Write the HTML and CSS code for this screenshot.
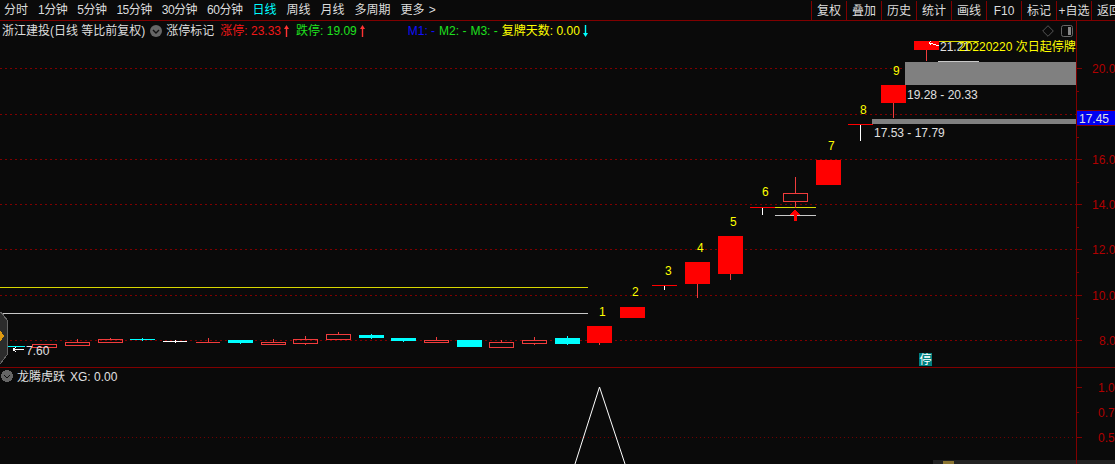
FILE: index.html
```html
<!DOCTYPE html>
<html lang="zh">
<head>
<meta charset="utf-8">
<title>浙江建投</title>
<link rel="stylesheet" href="styles.css">
</head>
<body>
<header class="topbar">
  <nav class="periods">
    <span>分时</span><span class="n">1分钟</span><span class="n">5分钟</span><span class="n">15分钟</span><span class="n">30分钟</span><span class="n">60分钟</span><span class="active">日线</span><span>周线</span><span>月线</span><span>多周期</span><span class="more">更多 &gt;</span>
  </nav>
  <nav class="tools">
    <span>复权</span><span>叠加</span><span>历史</span><span>统计</span><span>画线</span><span>F10</span><span>标记</span><span>+自选</span><span>返回</span>
  </nav>
</header>
<main class="stage">
  <div class="legend">
    <span class="title">浙江建投(日线 等比前复权)</span>
    <svg class="chev" width="12" height="12" viewBox="0 0 12 12"><circle cx="6" cy="6" r="6" fill="#666"/><path d="M3 5l3 3 3-3" fill="none" stroke="#111" stroke-width="1.4"/></svg>
    <span class="mark">涨停标记</span>
    <span class="up">涨停: 23.33</span>
    <svg class="arrow" width="5" height="12" viewBox="0 0 5 12"><path d="M2.5 0L5 4H3.2V12H1.8V4H0Z" fill="#f33"/></svg>
    <span class="down">跌停: 19.09</span>
    <svg class="arrow" width="5" height="12" viewBox="0 0 5 12"><path d="M2.5 0L5 4H3.2V12H1.8V4H0Z" fill="#f33"/></svg>
    <span class="m1">M1: -</span>
    <span class="m2">M2: -</span>
    <span class="m3">M3: -</span>
    <span class="resume">复牌天数: 0.00</span>
    <svg class="arrow" width="5" height="12" viewBox="0 0 5 12"><path d="M2.5 12L5 8H3.2V0H1.8V8H0Z" fill="#0ff"/></svg>
    <svg class="diamond" width="12" height="12" viewBox="0 0 12 12"><path d="M6 .7L11.3 6 6 11.3.7 6Z" fill="none" stroke="#555"/></svg>
    <svg class="panel" width="12" height="12" viewBox="0 0 12 12"><rect x=".5" y=".5" width="11" height="11" rx="2" fill="none" stroke="#666"/><rect x="7" y="2" width="3" height="8" fill="#888"/></svg>
  </div>
  <svg class="chart" width="1115" height="443" viewBox="0 21 1115 443">
    <g class="grid">
      <path d="M0 68.5H1076M0 114.5H1076M0 159.5H1076M0 204.5H1076M0 249.5H1076M0 295.5H1076M0 340.5H1076"/>
    </g>
    <path class="grid2" d="M0 437.5H1076"/>
    <path class="axis" d="M1076.5 21V464M0 367.5H1115"/>
    <path class="axis" d="M1076 68.5H1082M1076 91.5H1079M1076 114.5H1082M1076 137.5H1079M1076 159.5H1082M1076 182.5H1079M1076 204.5H1082M1076 227.5H1079M1076 249.5H1082M1076 272.5H1079M1076 295.5H1082M1076 318.5H1079M1076 340.5H1082M1076 387.5H1082M1076 412.5H1079M1076 437.5H1082"/>

    <rect class="gray" x="905" y="62" width="171" height="23"/>
    <rect class="gray" x="872" y="119" width="204" height="5"/>
    <g class="ylw">
      <rect x="0" y="287" width="588" height="1"/>
      <rect x="775" y="207" width="41" height="1"/>
      <rect x="939" y="41" width="40" height="1"/>
    </g>
    <path class="wht" d="M0 313.5H588M775 215.5H816M938 61.5H979"/>

    <g class="redline">
      <path d="M77.5 339V342M110.5 338V339M208.5 338V342M273.5 339V342M305.5 336V339M305.5 343V345M338.5 332V334M436.5 337V340M501.5 340V342M534.5 337V340M534.5 344V345M599.5 343V345M697.5 284V298M730.5 274V280M795.5 177V193M795.5 201V208M893.5 103V118M926.5 50V61"/>
      <path d="M196 342.5H220"/>
      <rect x="32.5" y="344.5" width="24" height="3"/>
      <rect x="65.5" y="342.5" width="24" height="3"/>
      <rect x="98.5" y="339.5" width="24" height="3"/>
      <rect x="261.5" y="342.5" width="24" height="2"/>
      <rect x="293.5" y="339.5" width="24" height="4"/>
      <rect x="326.5" y="334.5" width="24" height="5"/>
      <rect x="424.5" y="340.5" width="24" height="2"/>
      <rect x="489.5" y="342.5" width="24" height="5"/>
      <rect x="522.5" y="340.5" width="24" height="3"/>
      <rect x="783.5" y="193.5" width="24" height="8"/>
    </g>
    <g class="cyan">
      <rect x="0" y="346" width="25" height="1"/>
      <rect x="130" y="339" width="25" height="1"/><rect x="142" y="338" width="1" height="3"/>
      <rect x="228" y="340" width="25" height="3"/><rect x="240" y="343" width="1" height="1"/>
      <rect x="359" y="335" width="25" height="3"/><rect x="371" y="334" width="1" height="5"/>
      <rect x="391" y="338" width="25" height="3"/><rect x="403" y="341" width="1" height="1"/>
      <rect x="457" y="340" width="25" height="7"/>
      <rect x="555" y="338" width="25" height="6"/><rect x="567" y="336" width="1" height="9"/>
    </g>
    <path class="white" d="M163 341.5H187M175.5 340V343M860.5 125V141M762.5 208V215M664.5 286V290"/>
    <g class="red">
      <rect x="587" y="326" width="25" height="17"/>
      <rect x="620" y="307" width="25" height="11"/>
      <rect x="652" y="285" width="25" height="1"/>
      <rect x="685" y="262" width="25" height="22"/>
      <rect x="718" y="236" width="25" height="38"/>
      <rect x="750" y="207" width="25" height="1"/>
      <rect x="816" y="160" width="25" height="25"/>
      <rect x="848" y="124" width="25" height="1"/>
      <rect x="881" y="85" width="25" height="18"/>
      <rect x="914" y="41" width="25" height="9"/>
      <path d="M795 209L800 215H797V221H794V215H790Z"/>
    </g>
    <path class="wht1" d="M939 46L933 44M933 44L929 43M929 43L931 41M929 43L931 45"/>

    <g class="num">
      <text x="599" y="316">1</text><text x="632" y="296">2</text><text x="665" y="275">3</text><text x="697" y="252">4</text><text x="730" y="226">5</text><text x="762" y="196">6</text><text x="828" y="150">7</text><text x="860" y="114">8</text><text x="893" y="75">9</text>
    </g>
    <g class="lbl">
      <text x="907" y="99">19.28 - 20.33</text>
      <text x="874" y="137">17.53 - 17.79</text>
      <text x="940" y="51">21.21</text>
      <text x="26" y="355">7.60</text>
    </g>
    <text class="num" x="959" y="51">20220220 次日起停牌</text>
    <path class="wht1" d="M24 349.5H13M13 349.5L16 347M13 349.5L16 352"/>

    <g class="ax">
      <text x="1092" y="73">20.0</text><text x="1092" y="164">16.0</text><text x="1092" y="209">14.0</text><text x="1092" y="254">12.0</text><text x="1092" y="300">10.0</text><text x="1099" y="345">8.0</text>
      <text x="1098" y="392">1.0</text><text x="1098" y="417">0.7</text><text x="1098" y="442">0.5</text>
    </g>
    <rect class="price" x="1077" y="110" width="38" height="16"/>
    <path class="axis" d="M1077 110.5H1115M1077 125.5H1115"/>
    <text class="lbl" x="1079" y="123">17.45</text>

    <path class="handle" d="M-4 312H1L7 320V355L1 363H-4Z"/>
    <path class="orange" d="M-4 336L0 330L4 336L0 342Z"/>

    <rect class="teal" x="919" y="353" width="13" height="13"/>
    <text class="stop" x="919.5" y="364">停</text>

    <circle class="ico" cx="7" cy="376" r="6"/>
    <path class="chevron" d="M4 375l3 3 3-3"/>
    <text class="lbl" x="17" y="381">龙腾虎跃</text>
    <text class="lbl" x="70" y="381">XG: 0.00</text>
    <path class="peak" d="M575 464L599.5 387L625 464"/>

    <rect class="foot" x="933" y="460" width="143" height="4"/>
    <rect class="foot" x="1077" y="460" width="38" height="4"/>
    <rect class="gold" x="943" y="461" width="11" height="3"/>
  </svg>
</main>
</body>
</html>
```

FILE: styles.css
```css
* { box-sizing: border-box; }
html, body { margin: 0; height: 100%; overflow: hidden; background: #0a0a0a; }
body {
  width: 1115px;
  height: 464px;
  font: 12px/1 "Liberation Sans", "Noto Sans CJK SC", sans-serif;
  color: #ddd;
}
.topbar {
  display: flex;
  justify-content: space-between;
  height: 21px;
  border-bottom: 1px solid #800000;
  overflow: hidden;
}
.periods { display: flex; gap: 10px; padding-left: 4px; align-items: center; white-space: nowrap; }
.periods .n { letter-spacing: -0.5px; }
.periods .more { word-spacing: 1px; }
.active { color: #0ff; }
.tools { display: flex; align-items: stretch; margin-right: -11px; padding-top: 1px; }
.tools span {
  width: 35px;
  display: flex;
  align-items: center;
  justify-content: center;
  border-left: 1px solid #800000;
  white-space: nowrap;
}
.stage { position: relative; height: 443px; }
.chart { display: block; shape-rendering: crispEdges; }
.legend {
  position: absolute;
  left: 2px;
  top: 3px;
  width: 1074px;
  height: 14px;
  display: flex;
  align-items: center;
  white-space: nowrap;
}
.legend .chev { margin-left: 5px; }
.mark { margin-left: 4px; }
.up { color: #f01818; margin-left: 6px; }
.down { color: #1fe01f; margin-left: 7px; }
.arrow { margin-left: 3px; flex: none; }
.m1 { color: #1010ff; margin-left: 43px; }
.m2 { color: #1fe01f; margin-left: 4px; }
.m3 { color: #1fe01f; margin-left: 4px; }
.resume { color: #ff0; margin-left: 4px; }
.diamond { margin-left: auto; margin-right: 7px; }
.panel { margin-right: 3px; }

.grid path { fill: none; stroke: #800000; stroke-dasharray: 2 3; }
.grid2 { fill: none; stroke: #700000; stroke-dasharray: 1 3; }
.axis { fill: none; stroke: #800000; }
.gray { fill: #808080; }
.ylw rect { fill: #d8d800; }
.wht { fill: none; stroke: #c8c8c8; }
.wht1 { fill: none; stroke: #fff; }
.white { fill: none; stroke: #fff; }
.redline path, .redline rect { fill: none; stroke: #f03c3c; }
.cyan rect { fill: #0ff; }
.red rect, .red path { fill: #f00; }
.num text, text.num { fill: #ff0; font-size: 12px; }
.lbl text, text.lbl { fill: #e0e0e0; font-size: 12px; }
.ax text { fill: #b00000; font-size: 12px; }
.price { fill: #0000f0; }
.handle { fill: #2c2c2c; stroke: #666; }
.orange { fill: #e09a10; }
.teal { fill: #008080; }
.stop { fill: #fff; font-size: 12px; }
.ico { fill: #666; }
.chevron { fill: none; stroke: #111; stroke-width: 1.4; }
.peak { fill: none; stroke: #fff; shape-rendering: auto; }
.foot { fill: #222; }
.gold { fill: #8a7430; }
```
